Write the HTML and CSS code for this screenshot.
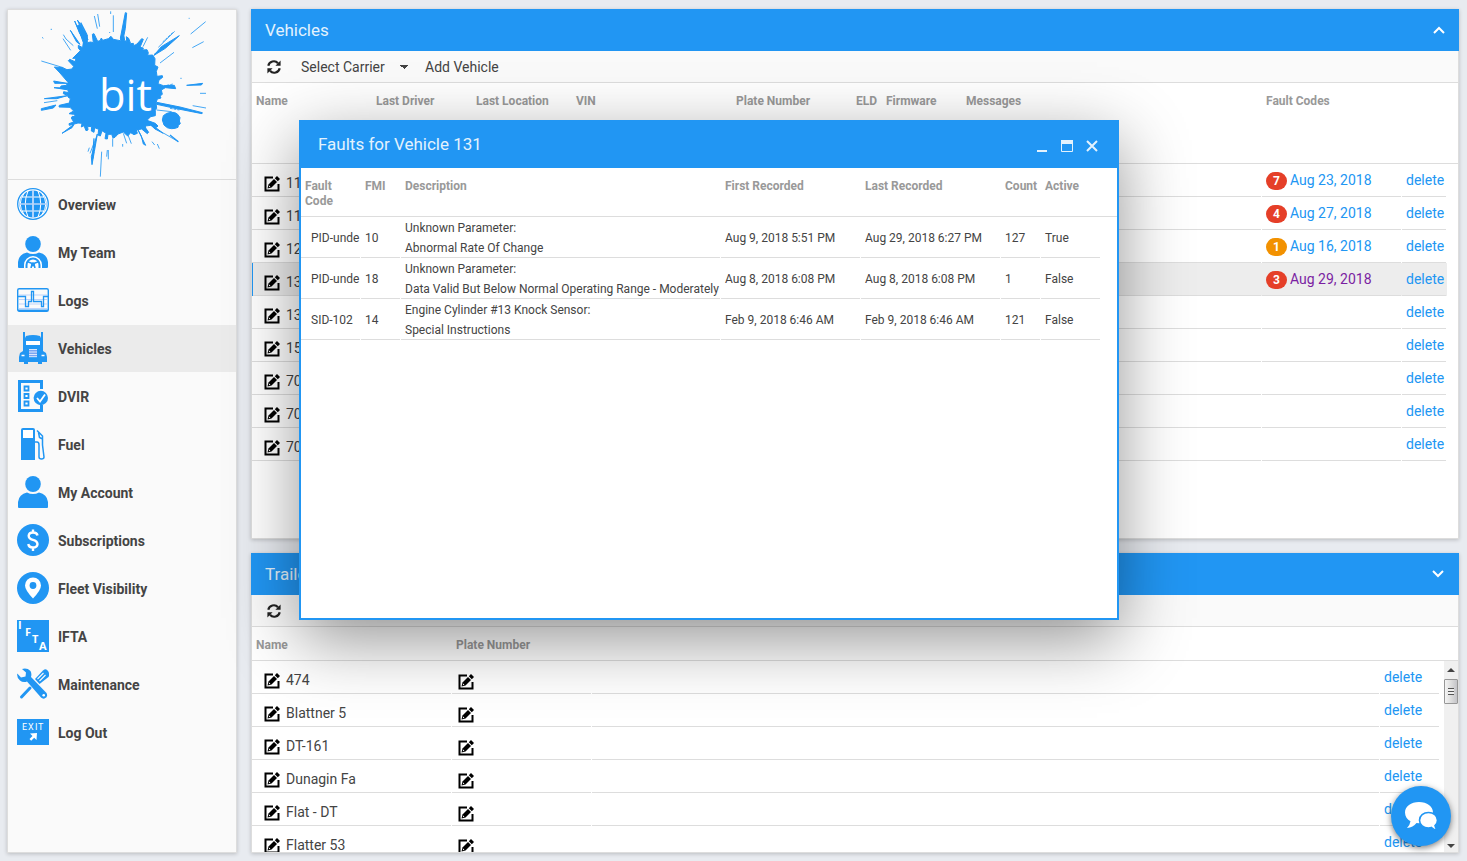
FILE: index.html
```html
<!DOCTYPE html>
<html lang="en">
<head>
<meta charset="utf-8">
<title>Vehicles</title>
<link rel="stylesheet" href="styles.css">
</head>
<body>
  <svg class="defs" aria-hidden="true">
    <symbol id="edit" viewBox="0 0 16 16">
      <path d="M9 1.500H1.500v13h13V8" fill="none" stroke="#000" stroke-width="2"/>
      <path d="M3.500 12.500l1-4L10 3l3 3-5.500 5.500z" fill="#000"/>
      <path d="M10.800 2.200L13 0l3 3-2.200 2.200z" fill="#000"/>
      <path d="M4.800 11.200l.4-1.600 1.200 1.200z" fill="#fff"/>
    </symbol>
    <symbol id="refresh" viewBox="0 0 14 14">
      <path d="M1.300 5.800A5.600 5.600 0 0 1 11 3.200M12.700 8.200A5.600 5.600 0 0 1 3 10.800" fill="none" stroke="#222" stroke-width="2.200"/>
      <path d="M13.600.6v5.200H8.400zM.4 13.400V8.200h5.200z" fill="#222"/>
    </symbol>
  </svg>

  <aside class="sidebar">
    <div class="logo">
      <svg class="logo__img" viewBox="24 30 684 507" role="img" aria-label="bit">
        <g fill="#2196f3" stroke="#2196f3" stroke-width="3" stroke-linejoin="round">
          <path d="M262 128L272 126L280 128L277 103L282 101L293 124L300 122L304 114L308 121L325 116L333 109L340 118L361 122L364 108L372 109L374 122L380 124L379 110L386 115L392 131L400 130L402 137L411 132L425 116L430 118L420 142L430 144L428 150L441 149L445 158L443 166L458 165L465 176L464 196L474 201L469 214L471 229L487 227L488 232L477 240L474 251L490 257L523 256L527 266L496 263L484 270L487 283L480 288L483 294L472 297L468 308L470 325L466 331V347L452 350L441 361L466 370L474 378L470 382L452 376L436 378L437 384L446 397L442 401L425 387L409 390L412 400L402 404L392 398L383 408L370 396L354 402L345 412L339 414L335 403L324 403L322 417L315 416L318 400L306 392L301 408L294 405L296 388L284 383L282 397L274 393L275 380L263 379L264 390L258 392L252 377L244 381L246 370L234 369L208 376L207 371L221 366L214 354L217 349L228 350L221 343L207 341L221 333L210 322L177 321L178 316L208 309L211 296L204 291L203 286L190 281L191 275L206 278L203 269L181 263L183 258L199 256L204 247L180 219L163 201L188 203L201 209L216 207L221 199L205 182L209 178L225 185L228 175L218 175L231 162L241 152L235 144L235 136L248 143L250 128L232 77L237 75L262 105z"/>
          <path d="M513 337q12-2 20 6l7 10-2 10 3 8-6 5-1 6q-8 4-19 4-14 0-23-11l-5-15 3-13q9-9 23-10z"/>
          <path d="M232 60L243 74L264 120L250 100zM224 63L246 112L238 98zM361 115L376 38L380 39L376 85L369 120zM211 91L240 133L230 126zM462 166L484 140L538 107L496 145zM161 243L201 250L164 250zM162 263L202 264L200 269zM470 307L540 321L607 338L606 341L525 325L470 313zM124 326L168 315L160 324L124 331zM133 296L202 287L170 296zM186 400L222 373L216 383zM436 360L490 400L465 387zM292 402L283 455L276 494L274 470zM560 256L608 250L604 255zM412 386L437 436L430 432L424 408z"/>
        </g>
        <g fill="none" stroke="#2196f3" stroke-width="2.500">
          <path d="M190 104l8 13 22 20M189 116l23 35M124 183l66 20M283 48l9 38M293 42l6 38M340 46v50M253 100l1 42M332 34v8M329 96v3M475 142l49-48M462 163l48-32M572 102l45-37M577 143l34-18M480 189l42-32M443 112l-14 28M541 235h4M600 280h18M132 308l40-6M578 317l40 7M490 399l45 26M456 425l8 10M472 432l6 14M305 455l-4 75M325 450v28M322 450l-2 20M338 415v25M370 400l10 30M384 405l10 26M368 432v8M290 410l-20 50M268 443l-4 12M566 55h3M126 112l4 3M152 88h4M470 330l45 5"/>
          <path d="M500 256l20-4M510 325l28 5M488 126l30-28" stroke-dasharray="8 3"/>
          <path d="M260 103l-18-35M254 96l-4 48M370 96l3-20M510 405l25 20M282 415l-4 60" stroke-width="4"/>
        </g>
        <text class="logo__text" x="297" y="332">bit</text>
      </svg>
    </div>
    <nav class="menu">
      <a class="menu__item" href="#">
        <svg class="menu__icon" viewBox="0 0 32 32">
          <circle cx="16" cy="16" r="15.300" fill="#fff" stroke="#2196f3" stroke-width="1.300"/>
          <circle cx="16" cy="16" r="13.500" fill="#2196f3"/>
          <g fill="none" stroke="#fff"><path d="M16 2v28M11 3Q5.500 16 11 29M21 3q5.500 13 0 26M7 5.500Q-.5 16 7 26.500M25 5.500Q32.500 16 25 26.500M5 9h22M5 23h22"/><path d="M2 16h28M16 2v28" stroke-width="1.600" stroke="#b9d5fa"/></g>
        </svg>
        Overview
      </a>
      <a class="menu__item" href="#">
        <svg class="menu__icon" viewBox="0 0 32 32" fill="#2196f3">
          <ellipse cx="16" cy="8" rx="7.800" ry="8"/>
          <path d="M1 31v-5Q2 18 10 16.500q6 3 12 0 8 1.500 9 9.500v5q0 1-1 1H2q-1 0-1-1z"/>
          <path d="M7 32v-3a9 9 0 0 1 18 0v3z" fill="#fff"/>
          <path d="M9.500 32v-3a6.500 6.500 0 0 1 13 0v3" fill="none" stroke="#2196f3" stroke-width="2"/>
          <path d="M10 25.500l4.500 1.800h3l4.500-1.800M14 32l1-3.500M18 32l-1-3.500" fill="none" stroke="#2196f3" stroke-width="1.600"/>
          <circle cx="16" cy="28.500" r="2"/>
        </svg>
        My Team
      </a>
      <a class="menu__item" href="#">
        <svg class="menu__icon" viewBox="0 0 32 32" fill="none" stroke="#2196f3">
          <rect x=".7" y="4.700" width="30.600" height="22.600" rx="1.500" stroke-width="1.400"/>
          <path d="M2 11h28M2 15.500h28M2 20h28M2 24.500h28" stroke="#bfd4fa"/>
          <path d="M1 12.500h7.500v10h3v-5h3v-10h2v10h8v5h2v-10H31" stroke-width="1.300"/>
          <path d="M1 26.300h30" stroke-width="1.500"/>
        </svg>
        Logs
      </a>
      <a class="menu__item menu__item_active" href="#">
        <svg class="menu__icon" viewBox="0 0 32 32" fill="#2196f3">
          <path d="M6 0h2v6l1-2q7-2 14 0l1 2V0h2v19l3 2 1 4v5h-5v2h-4v-2H11v2H7v-2H2v-5l1-4 3-2z"/>
          <rect x="9" y="9" width="14" height="4" fill="#fff"/>
          <rect x="12" y="17" width="8" height="8" fill="#7ba5f2"/>
          <path d="M12 17.500h8M12 20h8M12 22.500h8M12 24.700h8" stroke="#dce7fc"/>
          <path d="M4.500 23.500h3M24.500 23.500h3" stroke="#fff" stroke-width="1.600"/>
        </svg>
        Vehicles
      </a>
      <a class="menu__item" href="#">
        <svg class="menu__icon" viewBox="0 0 32 32">
          <path d="M24.500 9V1.500h-22v29h22V25" fill="none" stroke="#2196f3" stroke-width="3"/>
          <path d="M2.500 0v32" stroke="#2196f3" stroke-width="3"/>
          <path d="M7.500 6.500h4v4h-4zM7.500 14h4v4h-4zM7.500 21.500h4v4h-4z" fill="#fff" stroke="#2196f3" stroke-width="1.800"/>
          <circle cx="23.800" cy="18" r="7.200" fill="#2196f3"/>
          <path d="M20 18l3 3.500 5-7" fill="none" stroke="#fff" stroke-width="1.800"/>
        </svg>
        DVIR
      </a>
      <a class="menu__item" href="#">
        <svg class="menu__icon" viewBox="0 0 32 32">
          <path d="M6 0h10q2 0 2 2v30H4V2q0-2 2-2z" fill="#2196f3"/>
          <rect x="6" y="2" width="10" height="8" fill="#fff"/>
          <path d="M18 14h2q2 0 2 3v12q0 2 2.500 2t2.500-2L25.500 17V8L20 2.500M21.500 4.500l1 5 3 1.500" fill="none" stroke="#2196f3" stroke-width="1.500"/>
        </svg>
        Fuel
      </a>
      <a class="menu__item" href="#">
        <svg class="menu__icon" viewBox="0 0 32 32" fill="#2196f3">
          <ellipse cx="16" cy="8" rx="7.800" ry="8"/>
          <path d="M1 31v-5Q2 18 10 16.500q6 3 12 0 8 1.500 9 9.500v5q0 1-1 1H2q-1 0-1-1z"/>
        </svg>
        My Account
      </a>
      <a class="menu__item" href="#">
        <svg class="menu__icon" viewBox="0 0 32 32">
          <circle cx="16" cy="16" r="16" fill="#2196f3"/>
          <path d="M20.500 11.500Q20 8.500 16 8.500t-4.300 3.200q0 3 4.300 4.100t4.500 4.300Q20.200 23.500 16 23.500t-4.700-3.500M16 5.500v3M16 23.500v3.500" fill="none" stroke="#fff" stroke-width="2.400"/>
        </svg>
        Subscriptions
      </a>
      <a class="menu__item" href="#">
        <svg class="menu__icon" viewBox="0 0 32 32">
          <circle cx="16" cy="16" r="16" fill="#2196f3"/>
          <path d="M16 26.500Q8 18 8 13.500a8 8 0 0 1 16 0Q24 18 16 26.500z" fill="#fff"/>
          <circle cx="16" cy="13.500" r="3.400" fill="#2196f3"/>
        </svg>
        Fleet Visibility
      </a>
      <a class="menu__item" href="#">
        <svg class="menu__icon menu__icon_letters" viewBox="0 0 32 32">
          <rect width="32" height="32" fill="#2196f3"/>
          <text x="1" y="9">I</text><text x="8" y="16">F</text><text x="15" y="23">T</text><text x="22" y="30">A</text>
        </svg>
        IFTA
      </a>
      <a class="menu__item" href="#">
        <svg class="menu__icon" viewBox="0 0 32 32" fill="#2196f3">
          <path d="M18 11L26 2.500q3-2.500 5 .5t.500 6L22.500 16z"/>
          <path d="M20.500 11l6-6M22.500 13l6-6" stroke="#fafafa" stroke-width="1.100"/>
          <path d="M13 20l-8.500 9" stroke="#2196f3" stroke-width="3" stroke-linecap="round"/>
          <path d="M5 1q5-1.500 8.500 2 1.500 3 .5 6l15.500 16q2 4-2 5.500-2 .5-3.500-1L10 13.500q-4 1.500-7-1Q-.5 10 .3 5.500L4 9.500l4.500-1 .5-4z"/>
          <circle cx="26.700" cy="27.200" r="1.300" fill="#fff"/>
        </svg>
        Maintenance
      </a>
      <a class="menu__item" href="#">
        <svg class="menu__icon menu__icon_exit" viewBox="0 0 32 32">
          <rect y="3" width="32" height="26" fill="#2196f3"/>
          <text x="5" y="14">E</text><text x="11" y="14">X</text><text x="18" y="14">I</text><text x="21" y="14">T</text>
          <path d="M13 17.500l7-.5-.5 7-2.300-2.300-3 3-1.700-1.700 3-3z" fill="#fff"/>
        </svg>
        Log Out
      </a>
    </nav>
  </aside>

  <main class="content">
    <section class="panel panel_vehicles">
      <header class="panel__header">
        <h2 class="panel__title">Vehicles</h2>
        <button class="panel__toggle" aria-label="Collapse">
          <svg width="14" height="14" viewBox="0 0 14 14"><path d="M2 10l5-5 5 5" fill="none" stroke="#fff" stroke-width="2"/></svg>
        </button>
      </header>
      <div class="panel__body">
        <div class="toolbar">
          <button class="toolbar__refresh" aria-label="Refresh"><svg width="14" height="14"><use href="#refresh"/></svg></button>
          <select class="toolbar__select" aria-label="Carrier"><option>Select Carrier</option></select>
          <button class="toolbar__button">Add Vehicle</button>
        </div>
        <table class="grid grid_vehicles">
          <colgroup>
            <col class="w120"><col class="w100"><col class="w100"><col class="w160"><col class="w120"><col class="w30"><col class="w80"><col><col class="w140"><col class="w45"><col class="w11">
          </colgroup>
          <thead>
            <tr><th>Name</th><th>Last Driver</th><th>Last Location</th><th>VIN</th><th>Plate Number</th><th>ELD</th><th>Firmware</th><th>Messages</th><th>Fault Codes</th><th></th><th></th></tr>
          </thead>
          <tbody id="vehicles"></tbody>
        </table>
      </div>
    </section>

    <section class="panel panel_trailers">
      <header class="panel__header">
        <h2 class="panel__title">Trailers</h2>
        <button class="panel__toggle" aria-label="Expand">
          <svg width="14" height="14" viewBox="0 0 14 14"><path d="M1 4l5 5 5-5" fill="none" stroke="#fff" stroke-width="2"/></svg>
        </button>
      </header>
      <div class="panel__body">
        <div class="toolbar">
          <button class="toolbar__refresh" aria-label="Refresh"><svg width="14" height="14"><use href="#refresh"/></svg></button>
        </div>
        <table class="grid grid_trailers">
          <colgroup>
            <col class="w200"><col class="w140"><col><col class="w60"><col class="w18">
          </colgroup>
          <thead>
            <tr><th>Name</th><th>Plate Number</th><th></th><th></th><th></th></tr>
          </thead>
          <tbody id="trailers"></tbody>
        </table>
        <div class="scrollbar">
          <span class="scrollbar__arrow scrollbar__arrow_up"></span>
          <span class="scrollbar__thumb"></span>
          <span class="scrollbar__arrow scrollbar__arrow_down"></span>
        </div>
      </div>
    </section>
  </main>

  <div class="window" role="dialog" aria-labelledby="window-title">
    <header class="window__header">
      <h2 class="window__title" id="window-title">Faults for Vehicle 131</h2>
      <button class="window__button" aria-label="Minimize"><svg width="13" height="13"><path d="M1 11h10" stroke="#e3f2fd" stroke-width="2"/></svg></button>
      <button class="window__button" aria-label="Maximize"><svg width="13" height="13"><path d="M.5.500h11v11H.5z" fill="none" stroke="#e3f2fd"/><path d="M0 2h12" stroke="#e3f2fd" stroke-width="4"/></svg></button>
      <button class="window__button" aria-label="Close"><svg width="13" height="13"><path d="M1 1l10 10M11 1L1 11" stroke="#e3f2fd" stroke-width="2"/></svg></button>
    </header>
    <table class="grid grid_faults">
      <colgroup>
        <col class="w60"><col class="w40"><col><col class="w140"><col class="w140"><col class="w40"><col class="w60"><col class="w16">
      </colgroup>
      <thead>
        <tr><th>Fault Code</th><th>FMI</th><th>Description</th><th>First Recorded</th><th>Last Recorded</th><th>Count</th><th>Active</th><th></th></tr>
      </thead>
      <tbody>
        <tr><td>PID-unde</td><td>10</td><td>Unknown Parameter:<br>Abnormal Rate Of Change</td><td>Aug 9, 2018 5:51 PM</td><td>Aug 29, 2018 6:27 PM</td><td>127</td><td>True</td><td></td></tr>
        <tr><td>PID-unde</td><td>18</td><td>Unknown Parameter:<br>Data Valid But Below Normal Operating Range - Moderately</td><td>Aug 8, 2018 6:08 PM</td><td>Aug 8, 2018 6:08 PM</td><td>1</td><td>False</td><td></td></tr>
        <tr><td>SID-102</td><td>14</td><td>Engine Cylinder #13 Knock Sensor:<br>Special Instructions</td><td>Feb 9, 2018 6:46 AM</td><td>Feb 9, 2018 6:46 AM</td><td>121</td><td>False</td><td></td></tr>
      </tbody>
    </table>
  </div>

  <button class="chat" aria-label="Chat">
    <svg width="34" height="30" viewBox="0 0 34 30">
      <path d="M15 1C7 1 1 5.500 1 11.500c0 4 2.200 7 5.500 8.800Q6 24 3 27q6-.5 9.500-5 8 .8 13-3.500 3.500-3 3.500-7C29 5.500 23 1 15 1z" fill="#fff"/>
      <path d="M24.500 11.500c-5 0-9 3.300-9 7.800s4 7.700 9 7.700q1.500 0 3-.5 2.500 2.500 5.500 2.500-1.500-2-2-4.500 2.500-2 2.500-5.200c0-4.500-4-7.800-9-7.800z" fill="#fff" stroke="#2196f3" stroke-width="1.600"/>
    </svg>
  </button>

  <script>
    const edit = '<button class="edit" aria-label="Edit"><svg width="16" height="16"><use href="#edit"/></svg></button>';

    const vehicles = [
      ['11', 7, 'Aug 23, 2018'],
      ['11', 4, 'Aug 27, 2018'],
      ['12', 1, 'Aug 16, 2018'],
      ['131', 3, 'Aug 29, 2018'],
      ['13'],
      ['15'],
      ['70'],
      ['70'],
      ['70'],
    ];

    for (const [name, count, date] of vehicles) {
      const active = name === '131';
      const badge = count === 1 ? 'badge badge_warning' : 'badge';
      const fault = count
        ? `<span class="${badge}">${count}</span><a class="link${active ? ' link_visited' : ''}" href="#">${date}</a>`
        : '';
      document.getElementById('vehicles').insertAdjacentHTML('beforeend',
        `<tr class="${active ? 'selected' : ''}"><td class="name">${edit}${name}</td>${'<td></td>'.repeat(7)}<td class="fault">${fault}</td><td><a class="link" href="#">delete</a></td><td></td></tr>`);
    }

    for (const name of ['474', 'Blattner 5', 'DT-161', 'Dunagin Fa', 'Flat - DT', 'Flatter 53']) {
      document.getElementById('trailers').insertAdjacentHTML('beforeend',
        `<tr><td class="name">${edit}${name}</td><td class="plate">${edit}</td><td></td><td><a class="link" href="#">delete</a></td><td></td></tr>`);
    }
  </script>
</body>
</html>
```
FILE: styles.css
```css
* {
    box-sizing: border-box;
}
body {
    display: flex;
    gap: 14px;
    height: 100vh;
    margin: 0;
    padding: 9px 8px 8px 7px;
    overflow: hidden;
    background: #e8ebf0;
    color: #444;
    font-family: Roboto, sans-serif;
    font-size: 14px;
}
button, select {
    padding: 0;
    border: 0;
    background: none;
    color: inherit;
    font: inherit;
    cursor: pointer;
}
svg {
    display: block;
}
.defs {
    position: absolute;
    width: 0;
    height: 0;
}

.sidebar {
    flex: none;
    width: 230px;
    border: 1px solid #ddd;
    background: #fafafa;
    box-shadow: 0 1px 4px rgba(0, 0, 0, .2);
}
.logo {
    border-bottom: 1px solid #ddd;
}
.logo__img {
    width: 100%;
}
.logo__text {
    fill: #fff;
    font-family: "Open Sans", sans-serif;
    font-size: 130px;
}
.menu {
    display: flex;
    flex-direction: column;
    gap: 1px;
    padding-top: 1px;
}
.menu__item {
    display: flex;
    align-items: center;
    gap: 9px;
    height: 47px;
    padding-left: 9px;
    color: #444;
    font-weight: bold;
    text-decoration: none;
}
.menu__item_active {
    background: #ebebeb;
}
.menu__icon {
    width: 32px;
    height: 32px;
    margin-bottom: 1px;
}
.menu__icon_letters {
    fill: #fff;
    font-family: "Open Sans", sans-serif;
    font-size: 11px;
}
.menu__icon_exit {
    fill: #fff;
    font-size: 9px;
    font-weight: normal;
}

.content {
    display: flex;
    flex: 1;
    flex-direction: column;
    gap: 14px;
    min-width: 0;
}
.panel {
    display: flex;
    flex-direction: column;
    min-height: 0;
    box-shadow: 0 1px 4px rgba(0, 0, 0, .2);
}
.panel_vehicles {
    flex: 53 1 0;
}
.panel_trailers {
    flex: 30 1 0;
}
.panel__header {
    display: flex;
    flex: none;
    align-items: center;
    justify-content: space-between;
    height: 42px;
    padding: 0 13px 0 14px;
    background: #2196f3;
}
.panel__title, .window__title {
    margin: 0;
    color: #e3f2fd;
    font-size: 17px;
    font-weight: normal;
}
.panel__body {
    position: relative;
    flex: 1;
    min-height: 0;
    overflow: hidden;
    border: 1px solid #ddd;
    border-top: 0;
    background: #fff;
}

.toolbar {
    display: flex;
    align-items: center;
    height: 32px;
    padding-left: 15px;
    border-bottom: 1px solid #ddd;
    background: #fafafa;
}
.toolbar__refresh {
    margin-right: 20px;
}
.toolbar__select {
    width: 107px;
    margin-right: 17px;
    appearance: none;
    background: conic-gradient(from -45deg at 50% 100%, #444 90deg, transparent 0) right center / 8px 4px no-repeat;
}

.grid {
    width: 100%;
    border-spacing: 0;
    table-layout: fixed;
}
.grid th {
    height: 34px;
    padding: 11px 4px 0;
    border-bottom: 1px solid #ddd;
    color: #999;
    font-size: 12px;
    font-weight: bold;
    line-height: 15px;
    text-align: left;
    vertical-align: top;
}
.grid_vehicles th {
    height: 81px;
}
.grid td {
    height: 33px;
    padding: 0 4px 1px;
    overflow: hidden;
    background: linear-gradient(#ddd, #ddd) left bottom / calc(100% - 1px) 1px no-repeat;
    white-space: nowrap;
}
.grid td:last-child {
    background: none;
}
.grid td.name {
    padding: 6px 0 0 12px;
}
.grid td.plate {
    padding: 7px 0 0 6px;
}
.grid td.fault {
    padding: 1px 4px 0;
}
.grid .selected td:not(:last-child) {
    background-color: #ededed;
}
.grid .selected .name {
    box-shadow: inset 1px 0 #2196f3;
}
.grid_faults th {
    height: 49px;
}
.grid_faults td {
    height: 41px;
    padding: 1px 4px 0;
    font-size: 12px;
    line-height: 20px;
}
.grid_faults td:first-child {
    padding-left: 10px;
    padding-right: 0;
}
.w11 { width: 11px; }
.w16 { width: 16px; }
.w18 { width: 18px; }
.w30 { width: 30px; }
.w40 { width: 40px; }
.w45 { width: 45px; }
.w60 { width: 60px; }
.w80 { width: 80px; }
.w100 { width: 100px; }
.w120 { width: 120px; }
.w140 { width: 140px; }
.w160 { width: 160px; }
.w200 { width: 200px; }

.edit {
    margin-right: 6px;
    vertical-align: middle;
}
.link {
    color: #2196f3;
    text-decoration: none;
}
.link_visited {
    color: #7b1fa2;
}
.badge {
    display: inline-block;
    width: 21px;
    margin-right: 3px;
    border-radius: 9px;
    background: #e53f28;
    color: #fff;
    font-size: 12px;
    font-weight: bold;
    line-height: 18px;
    text-align: center;
}
.badge_warning {
    background: #f29100;
}

.scrollbar {
    position: absolute;
    top: 66px;
    right: 0;
    bottom: 0;
    display: flex;
    flex-direction: column;
    align-items: center;
    width: 14px;
    padding: 7px 0 4px;
    background: #f0f0f0;
}
.scrollbar__arrow {
    border: 4px solid transparent;
}
.scrollbar__arrow_up {
    border-top: 0;
    border-bottom: 4px solid #444;
}
.scrollbar__arrow_down {
    margin-top: auto;
    border-top: 4px solid #444;
    border-bottom: 0;
}
.scrollbar__thumb {
    width: 14px;
    height: 25px;
    margin-top: 7px;
    border: 1px solid #979797;
    border-radius: 1px;
    background: repeating-linear-gradient(#555 0 1px, #eee 1px 3px) center / 6px 7px no-repeat,
        linear-gradient(to right, #f4f4f4, #ddd 50%, #c4c4c8);
}

.window {
    position: absolute;
    top: 120px;
    left: 299px;
    width: 820px;
    height: 500px;
    border: 2px solid #2196f3;
    background: #fff;
    box-shadow: 0 20px 64px rgba(0, 0, 0, .42);
}
.window__header {
    display: flex;
    align-items: center;
    gap: 12px;
    height: 46px;
    padding: 0 18px 0 17px;
    background: #2196f3;
}
.window__title {
    flex: 1;
    padding-bottom: 2px;
}
.window__button {
    margin-top: 2px;
}

.chat {
    position: fixed;
    right: 16px;
    bottom: 15px;
    display: flex;
    align-items: center;
    justify-content: center;
    width: 60px;
    height: 60px;
    border-radius: 50%;
    background: #2196f3;
    box-shadow: 0 2px 6px rgba(0, 0, 0, .5);
}
```
